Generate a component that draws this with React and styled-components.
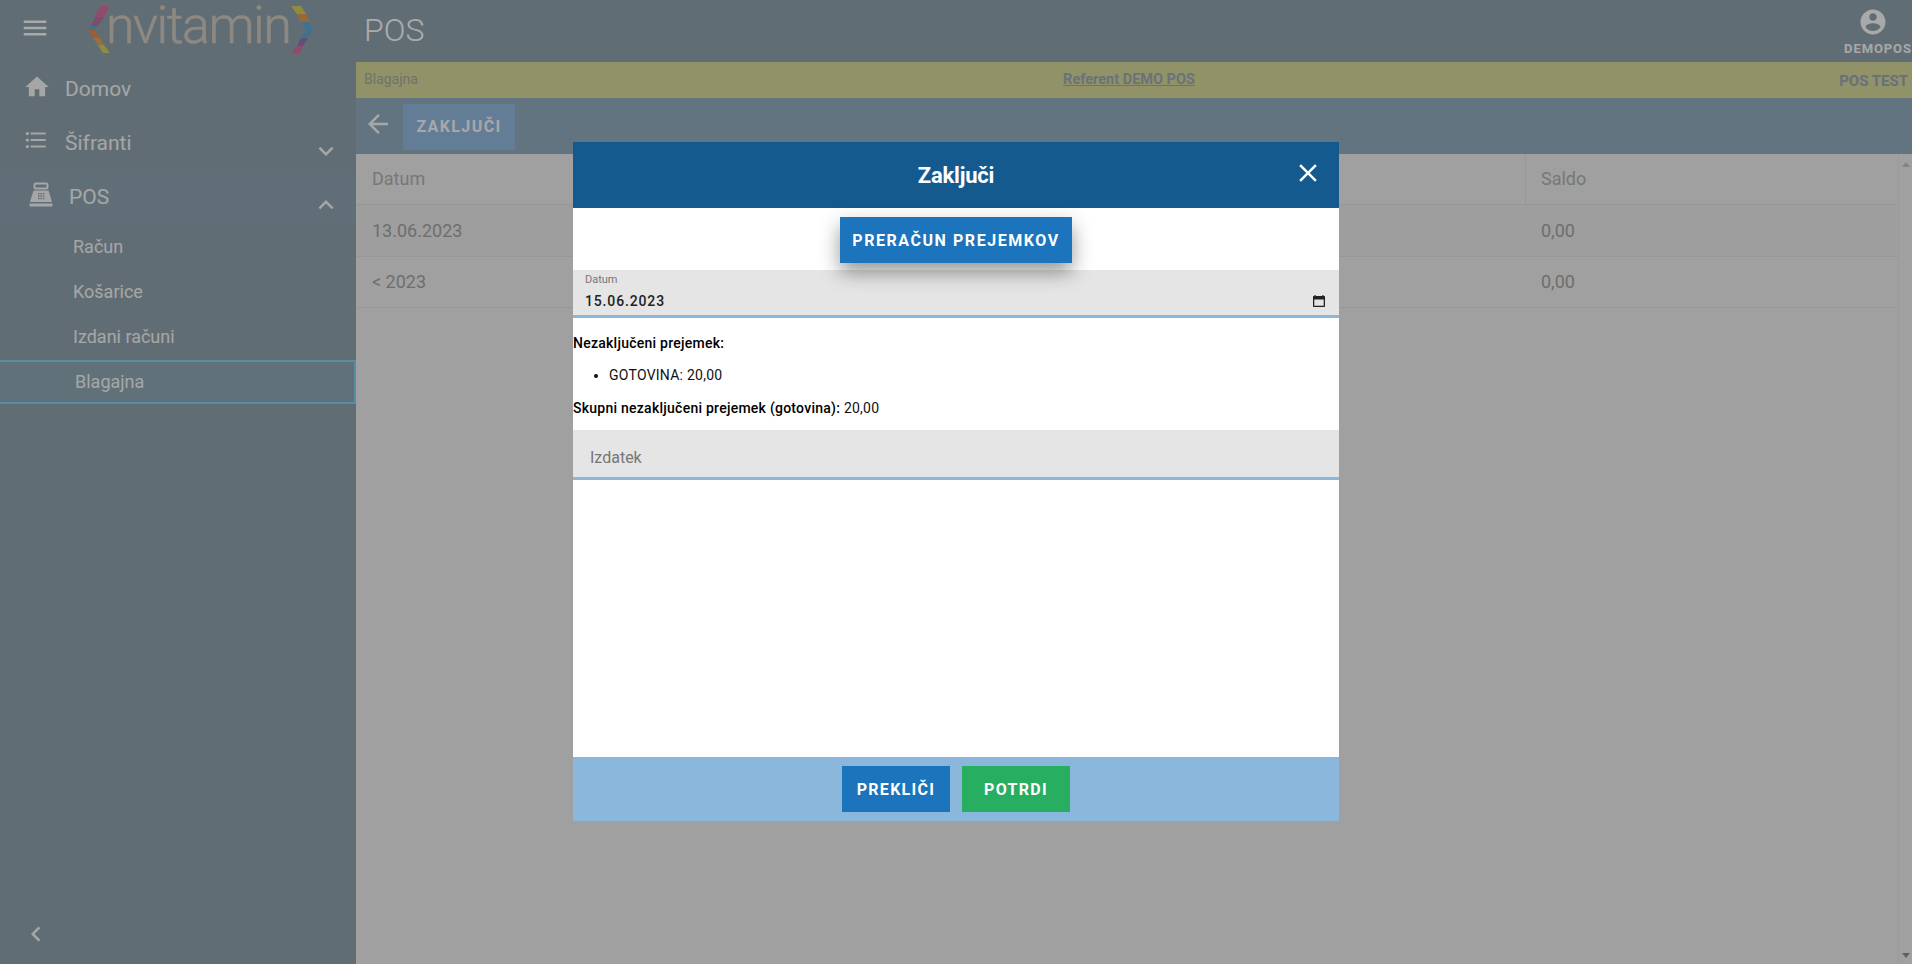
import React from "react";
import styled, { createGlobalStyle } from "styled-components";

const Global = createGlobalStyle`
  html, body { margin: 0; padding: 0; height: 100%; overflow: hidden; }
  body { font-family: Roboto, "Liberation Sans", sans-serif; background: #e5e5e5; }
  * { box-sizing: border-box; }
`;

const Page = styled.div`
  width: 1912px; height: 964px; display: flex; flex-direction: column; overflow: hidden;
`;
const Header = styled.header`
  height: 62px; flex: none; display: flex; align-items: center; background: #8c9da7; color: #f2f2f2;
`;
const BrandZone = styled.div`
  width: 356px; flex: none; display: flex; align-items: center; height: 100%;
`;
const MenuButton = styled.span`
  display: flex; margin-left: 20px; margin-top: -7px;
`;
const Logo = styled.div`
  display: flex; align-items: center; margin-left: 38px; height: 58px; margin-bottom: 4px;
`;
const LogoText = styled.span`
  font-family: Roboto, sans-serif; font-weight: 300; font-size: 52px; letter-spacing: -1.5px; color: #cbc4ba;
  -webkit-text-stroke: 0.5px #cbc4ba;
  line-height: 50px; margin: -7px 1px 0 -4px; white-space: nowrap;
`;
const PageTitle = styled.h1`
  margin: -3px 0 0 8px; font-size: 32px; font-weight: 300; color: #f5f5f5; flex: 1;
`;
const UserBox = styled.div`
  width: 68px; display: flex; flex-direction: column; align-items: center;
`;
const UserIcon = styled.span`
  display: flex; margin: 0.5px 11px 0 0;
`;
const UserName = styled.span`
  font-size: 13px; font-weight: 700; letter-spacing: 0.9px; color: #f0f0f0; line-height: 15px; white-space: nowrap; margin-top: 3.5px;
`;
const Body = styled.div`
  flex: 1; display: flex; min-height: 0;
`;
const Sidebar = styled.nav`
  width: 356px; flex: none; background: #8c9da7; display: flex; flex-direction: column; color: #eeeeee;
`;
const NavItem = styled.div`
  height: 54px; display: flex; align-items: center; position: relative; font-size: 21px;
  padding-left: ${p => p.$pad || 23}px;
  background: ${p => (p.$open ? "#8aa0ab" : "transparent")};
`;
const NavIcon = styled.span`
  display: flex; width: ${p => p.$w || 42}px; margin-top: ${p => p.$top || 0}px; flex: none;
`;
const NavLabel = styled.span`
  flex: 1; margin-top: ${p => p.$top || 0}px;
`;
const NavChevron = styled.span`
  display: flex; margin: 16px 15px 0 0;
`;
const SubItem = styled.div`
  height: 45px; display: flex; align-items: center; font-size: 18px; padding-left: 73px;
  ${p => p.$active && `
    height: 44px; margin-top: 1px; padding: 0 0 1px 75px;
    border: solid #80cbe8; border-width: 2px 2px 2px 0; background: #8ca3ae;
  `}
`;
const SideFooter = styled.div`
  margin-top: auto; padding: 0 0 15px 21px; display: flex;
`;
const Main = styled.main`
  flex: 1; display: flex; flex-direction: column; min-width: 0;
`;
const Notice = styled.div`
  height: 36px; flex: none; background: #d0d194; display: grid; grid-template-columns: 1fr 1fr 1fr; align-items: center; padding: 0 4px 0 8px;
`;
const NoticeLeft = styled.span`
  font-size: 14px; color: #9ea5a0; margin-top: -2px;
`;
const NoticeCenter = styled.a`
  font-size: 14.5px; font-weight: 700; text-decoration: underline; color: #96a5af; text-align: center; margin-top: -2px; transform: translateX(-7px);
`;
const NoticeRight = styled.span`
  font-size: 15px; font-weight: 700; color: #92a2b0; text-align: right; margin-top: 2px;
`;
const Toolbar = styled.div`
  height: 56px; flex: none; background: #8ea6b9; display: flex; align-items: center; padding-left: 7px;
`;
const BackIcon = styled.span`
  display: flex; margin: -5px 10px 0 0;
`;
const ToolButton = styled.button`
  border: 0; width: 112px; height: 46px; background: #8fb3d9; color: #f0f0f0; font: 700 16px Roboto, sans-serif; letter-spacing: 1.4px; padding: 0; margin-top: 1px;
`;
const TableWrap = styled.div`
  flex: 1; display: flex; min-height: 0; background: #e5e5e5;
`;
const Table = styled.div`
  flex: 1; display: flex; flex-direction: column;
`;
const Row = styled.div`
  height: ${p => p.$h || 51.5}px; display: grid; grid-template-columns: 1fr 373px; border-bottom: 1px solid #d8d8d8;
  background: ${p => p.$bg || "#e5e5e5"}; font-size: 18px; color: ${p => p.$color || "#9e9e9e"};
`;
const Cell = styled.div`
  display: flex; align-items: center; padding: 0 0 ${p => p.$lift || 0}px 16px;
  ${p => p.$sep && "border-left: 1px solid #d8d8d8; padding-left: 15px;"}
`;
const Scrollbar = styled.div`
  width: 14px; flex: none; display: flex; flex-direction: column; justify-content: space-between; align-items: center; padding: 8px 0 6px; border-left: 1px solid #dedede;
`;
const Backdrop = styled.div`
  position: fixed; inset: 0; background: rgba(0,0,0,0.3); display: flex; align-items: center; justify-content: center;
`;
const Modal = styled.section`
  width: 766px; height: 679px; background: #fff; display: flex; flex-direction: column; margin-top: -1px;
`;
const ModalHead = styled.div`
  height: 66px; flex: none; background: #155a8e; position: relative; display: flex; align-items: center; justify-content: center;
`;
const ModalTitle = styled.h2`
  margin: 0; color: #fff; font-size: 22px; font-weight: 700; letter-spacing: -0.2px;
`;
const CloseIcon = styled.span`
  position: absolute; right: 16px; top: 16px; display: flex;
`;
const ActionRow = styled.div`
  height: 62px; flex: none; display: flex; justify-content: center; padding-top: 9px;
`;
const RaisedButton = styled.button`
  width: 232px; height: 46px; border: 0; padding: 0; background: #1b74bc; color: #fff; font: 700 16px Roboto, sans-serif; letter-spacing: 1.55px;
  box-shadow: 0 9px 20px rgba(0,0,0,0.42); position: relative; z-index: 1;
`;
const DateField = styled.div`
  height: 48px; flex: none; background: #e5e5e5; border-bottom: 3px solid #8cb7dd; padding: 3px 13px 0 12px; position: relative;
`;
const DateLabel = styled.div`
  font-size: 11px; line-height: 13px; color: #757575;
`;
const DateValueRow = styled.div`
  display: flex; justify-content: space-between; align-items: center; margin-top: 5px;
`;
const DateValue = styled.span`
  font-size: 14px; font-weight: 500; letter-spacing: 0.85px; color: #222; line-height: 20px;
`;
const Summary = styled.div`
  height: 112px; flex: none; font-size: 14px; line-height: 20px; color: #111; padding-top: 15px; letter-spacing: 0.25px;
`;
const SummaryLine = styled.p`
  margin: 0;
`;
const Strong = styled.strong`
  font-weight: 500; color: #000;
`;
const Bullets = styled.ul`
  margin: 12px 0 13px; padding-left: 36px;
`;
const InputField = styled.div`
  height: 50px; flex: none; background: #e5e5e5; border-bottom: 3px solid #8cb7dd; display: flex; align-items: center; padding: 8px 0 0 17px; font-size: 16px; color: #767676;
`;
const Spacer = styled.div`
  flex: 1;
`;
const ModalFoot = styled.div`
  height: 64px; flex: none; background: #8cb7dd; display: flex; align-items: center; justify-content: center; gap: 12px;
`;
const FootButton = styled.button`
  width: 108px; height: 46px; border: 0; padding: 0; color: #fff; background: ${p => p.$bg}; font: 700 16px Roboto, sans-serif; letter-spacing: 1.3px;
`;

const Icon = ({ d, size = 24, fill = "currentColor" }) => (
  <svg width={size} height={size} viewBox="0 0 24 24" fill={fill} style={{ display: "block" }}><path d={d} /></svg>
);
const P = {
  menu: "M3 18h18v-2H3v2zm0-5h18v-2H3v2zm0-7v2h18V6H3z",
  home: "M10 20v-6h4v6h5v-8h3L12 3 2 12h3v8z",
  list: "M4 10.5c-.83 0-1.5.67-1.5 1.5s.67 1.5 1.5 1.5 1.5-.67 1.5-1.5-.67-1.5-1.5-1.5zm0-6c-.83 0-1.5.67-1.5 1.5S3.17 7.5 4 7.5 5.5 6.83 5.5 6 4.83 4.5 4 4.5zm0 12c-.83 0-1.5.68-1.5 1.5s.68 1.5 1.5 1.5 1.5-.68 1.5-1.5-.67-1.5-1.5-1.5zM7 19h14v-2H7v2zm0-6h14v-2H7v2zm0-8v2h14V5H7z",
  down: "M7.41 8.59 12 13.17l4.59-4.58L18 10l-6 6-6-6z",
  up: "M7.41 15.41 12 10.83l4.59 4.58L18 14l-6-6-6 6z",
  left: "M15.41 7.41 14 6l-6 6 6 6 1.41-1.41L10.83 12z",
  back: "M20 11H7.83l5.59-5.59L12 4l-8 8 8 8 1.41-1.41L7.83 13H20v-2z",
  close: "M19 6.41 17.59 5 12 10.59 6.41 5 5 6.41 10.59 12 5 17.59 6.41 19 12 13.41 17.59 19 19 17.59 13.41 12z",
  account: "M12 2C6.48 2 2 6.48 2 12s4.48 10 10 10 10-4.48 10-10S17.52 2 12 2zm0 3c1.66 0 3 1.34 3 3s-1.34 3-3 3-3-1.34-3-3 1.34-3 3-3zm0 14.2c-2.5 0-4.71-1.28-6-3.22.03-1.99 4-3.08 6-3.08 1.99 0 5.97 1.09 6 3.08-1.29 1.94-3.5 3.22-6 3.22z",
};

const Register = () => (
  <svg width="26" height="26" viewBox="0 0 26 26" style={{ display: "block" }}>
    <rect x="6.5" y="1.5" width="13" height="5" rx="1.5" fill="none" stroke="currentColor" strokeWidth="2" />
    <path fill="currentColor" d="M5.5 8.5h15l3.5 11.5H2z" />
    <g fill="#8aa0ab">
      <rect x="10" y="11" width="1.6" height="1.4" /><rect x="12.4" y="11" width="1.6" height="1.4" /><rect x="14.8" y="11" width="1.6" height="1.4" />
      <rect x="10" y="13.4" width="1.6" height="1.4" /><rect x="12.4" y="13.4" width="1.6" height="1.4" /><rect x="14.8" y="13.4" width="1.6" height="1.4" />
      <rect x="10" y="15.8" width="1.6" height="1.4" /><rect x="12.4" y="15.8" width="1.6" height="1.4" /><rect x="14.8" y="15.8" width="1.6" height="1.4" />
    </g>
    <rect x="1.5" y="21.5" width="23" height="3" rx="1" fill="currentColor" />
  </svg>
);

const LogoLeft = () => (
  <svg width="22" height="47" viewBox="0 0 22 47" style={{ display: "block" }}>
    <polygon points="12,0 22,0 16,11 7,11" fill="#cf6e98" />
    <polygon points="7,11 16,11 10,20 3,20" fill="#b56f9e" />
    <polygon points="3,20 10,20 7,24 0,24" fill="#5fa4c8" />
    <polygon points="0,24 7,24 12,32 5,32" fill="#d98a50" />
    <polygon points="5,32 12,32 16,39 10,39" fill="#d8a05e" />
    <polygon points="10,39 16,39 22,47 15,47" fill="#cfc95a" />
  </svg>
);
const LogoRight = () => (
  <svg width="22" height="47" viewBox="0 0 22 47" style={{ display: "block" }}>
    <polygon points="0,0 10,0 15,8 6,8" fill="#cfc95a" />
    <polygon points="6,8 15,8 19,16 10,16" fill="#d9974f" />
    <polygon points="10,16 19,16 22,24 15,24" fill="#5fa4c8" />
    <polygon points="15,24 22,24 17,32 10,32" fill="#5fa4c8" />
    <polygon points="10,32 17,32 12,40 6,40" fill="#8f70ac" />
    <polygon points="6,40 12,40 9,47 0,47" fill="#cf6e98" />
  </svg>
);

export default function App() {
  return (
    <Page>
      <Global />
      <Header>
        <BrandZone>
          <MenuButton><Icon d={P.menu} size={30} /></MenuButton>
          <Logo><LogoLeft /><LogoText>nvitamin</LogoText><LogoRight /></Logo>
        </BrandZone>
        <PageTitle>POS</PageTitle>
        <UserBox>
          <UserIcon><Icon d={P.account} size={30} /></UserIcon>
          <UserName>DEMOPOS</UserName>
        </UserBox>
      </Header>
      <Body>
        <Sidebar>
          <NavItem>
            <NavIcon $top={-4}><Icon d={P.home} size={28} /></NavIcon>
            <NavLabel>Domov</NavLabel>
          </NavItem>
          <NavItem>
            <NavIcon $top={-6}><Icon d={P.list} size={26} /></NavIcon>
            <NavLabel>Šifranti</NavLabel>
            <NavChevron><Icon d={P.down} size={30} /></NavChevron>
          </NavItem>
          <NavItem $open $pad={28}>
            <NavIcon $w={41} $top={-4}><Register /></NavIcon>
            <NavLabel>POS</NavLabel>
            <NavChevron><Icon d={P.up} size={30} /></NavChevron>
          </NavItem>
          <SubItem>Račun</SubItem>
          <SubItem>Košarice</SubItem>
          <SubItem>Izdani računi</SubItem>
          <SubItem $active>Blagajna</SubItem>
          <SideFooter><Icon d={P.left} size={30} /></SideFooter>
        </Sidebar>
        <Main>
          <Notice>
            <NoticeLeft>Blagajna</NoticeLeft>
            <NoticeCenter>Referent DEMO POS</NoticeCenter>
            <NoticeRight>POS TEST</NoticeRight>
          </Notice>
          <Toolbar>
            <BackIcon><Icon d={P.back} size={30} fill="#f0f0f0" /></BackIcon>
            <ToolButton>ZAKLJUČI</ToolButton>
          </Toolbar>
          <TableWrap>
            <Table>
              <Row $color="#ababab" $h={51}>
                <Cell $lift={2}>Datum</Cell>
                <Cell $sep $lift={2}>Saldo</Cell>
              </Row>
              <Row $bg="#e2e2e2">
                <Cell>13.06.2023</Cell>
                <Cell>0,00</Cell>
              </Row>
              <Row>
                <Cell>&lt; 2023</Cell>
                <Cell>0,00</Cell>
              </Row>
            </Table>
            <Scrollbar>
              <svg width="8" height="5" viewBox="0 0 8 5"><polygon points="4,0 8,5 0,5" fill="#bdbdbd" /></svg>
              <svg width="8" height="5" viewBox="0 0 8 5"><polygon points="0,0 8,0 4,5" fill="#8a8a8a" /></svg>
            </Scrollbar>
          </TableWrap>
        </Main>
      </Body>
      <Backdrop>
        <Modal>
          <ModalHead>
            <ModalTitle>Zaključi</ModalTitle>
            <CloseIcon><Icon d={P.close} size={30} fill="#fff" /></CloseIcon>
          </ModalHead>
          <ActionRow><RaisedButton>PRERAČUN PREJEMKOV</RaisedButton></ActionRow>
          <DateField>
            <DateLabel>Datum</DateLabel>
            <DateValueRow>
              <DateValue>15.06.2023</DateValue>
              <svg width="14" height="14" viewBox="0 0 14 14">
                <path d="M2.5 1h1.2v1h6.6V1h1.2v1h.5c.6 0 1 .4 1 1v9c0 .6-.4 1-1 1H2c-.6 0-1-.4-1-1V3c0-.6.4-1 1-1h.5zM2.3 5.4v6.3h9.4V5.4z" fill="#222" />
              </svg>
            </DateValueRow>
          </DateField>
          <Summary>
            <SummaryLine><Strong>Nezaključeni prejemek:</Strong></SummaryLine>
            <Bullets><li>GOTOVINA: 20,00</li></Bullets>
            <SummaryLine><Strong>Skupni nezaključeni prejemek (gotovina):</Strong> 20,00</SummaryLine>
          </Summary>
          <InputField>Izdatek</InputField>
          <Spacer />
          <ModalFoot>
            <FootButton $bg="#1b74bc">PREKLIČI</FootButton>
            <FootButton $bg="#28ae60">POTRDI</FootButton>
          </ModalFoot>
        </Modal>
      </Backdrop>
    </Page>
  );
}
